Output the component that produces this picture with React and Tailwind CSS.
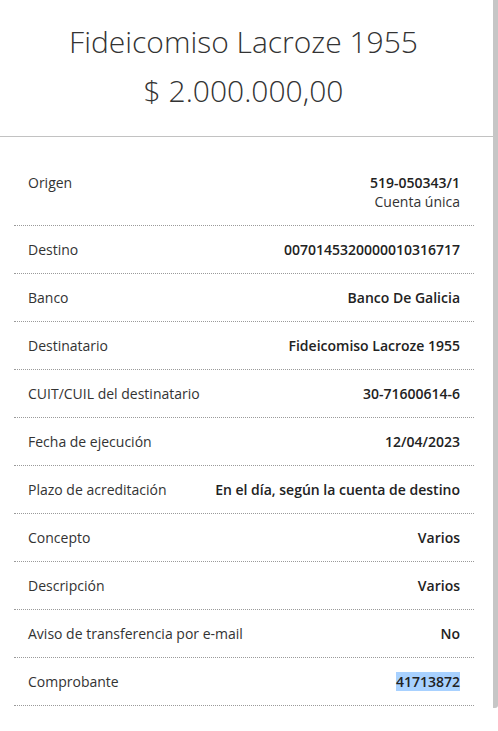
import React from "react";

const rows = [
  { label: "Origen", value: "519-050343/1", sub: "Cuenta única" },
  { label: "Destino", value: "0070145320000010316717" },
  { label: "Banco", value: "Banco De Galicia" },
  { label: "Destinatario", value: "Fideicomiso Lacroze 1955" },
  { label: "CUIT/CUIL del destinatario", value: "30-71600614-6" },
  { label: "Fecha de ejecución", value: "12/04/2023" },
  { label: "Plazo de acreditación", value: "En el día, según la cuenta de destino" },
  { label: "Concepto", value: "Varios" },
  { label: "Descripción", value: "Varios" },
  { label: "Aviso de transferencia por e-mail", value: "No" },
  { label: "Comprobante", value: "41713872", selected: true },
];

const App = () => {
  return (
    <div className="bg-white min-h-[731px] font-['Open_Sans',sans-serif] text-[#333]">
      <div className="border-r-[5px] border-[#c6c6c6] rounded-br-[3px] pb-[2px]">
        <div className="h-[137px] border-b border-[#c2c2c2] flex flex-col items-center pt-[17px] pr-[6px]">
          <h1 className="text-[30px] font-light leading-[49px]">
            Fideicomiso Lacroze 1955
          </h1>
          <p className="text-[30px] font-light leading-[49px]">
            $ 2.000.000,00
          </p>
        </div>
        <div className="pl-[14px] pr-[19px] pt-[22px]">
          {rows.map((row) => (
            <div
              key={row.label}
              className="flex justify-between items-start gap-4 px-[14px] py-[14px] border-b border-dotted border-[#9a9a9a] text-[14px] leading-[19px]"
            >
              <span className="text-[#333]">{row.label}</span>
              <div className="text-right">
                <span
                  className={
                    row.selected
                      ? "font-semibold text-[#222] bg-[#a8d1ff]"
                      : "font-semibold text-[#222]"
                  }
                >
                  {row.value}
                </span>
                {row.sub && <div className="text-[#333]">{row.sub}</div>}
              </div>
            </div>
          ))}
        </div>
      </div>
    </div>
  );
};

export default App;
